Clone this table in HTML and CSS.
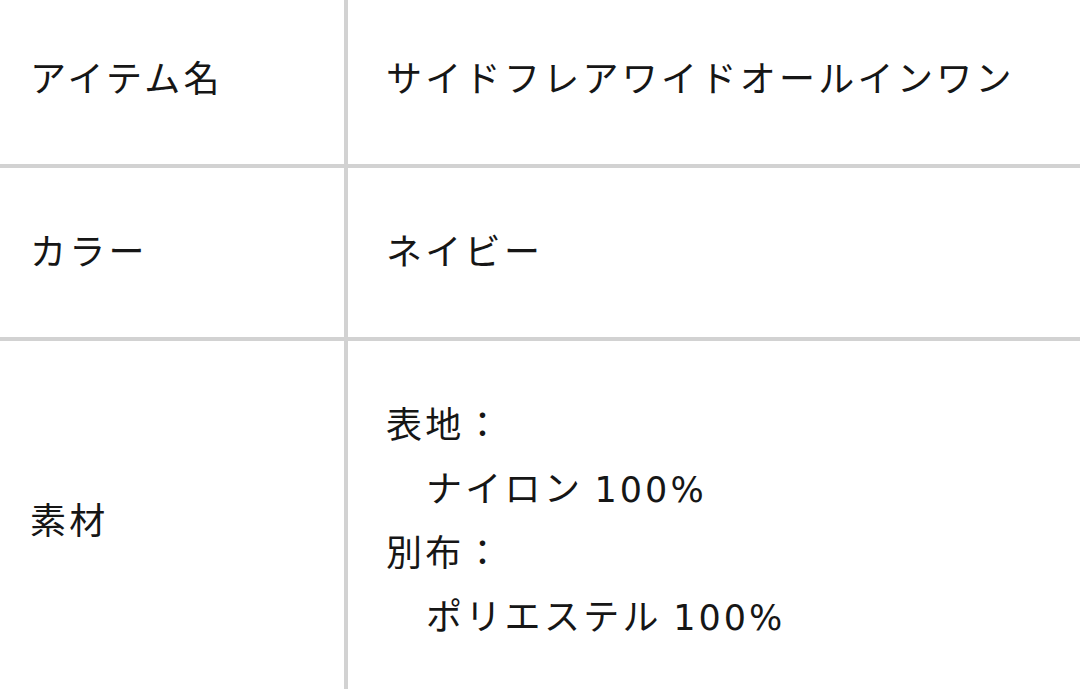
FILE: index.html
```html
<!DOCTYPE html>
<html lang="ja">
<head>
<meta charset="utf-8">
<link rel="stylesheet" href="styles.css">
</head>
<body>
<table class="spec">
  <tr>
    <th class="label">アイテム名</th>
    <td class="value">サイドフレアワイドオールインワン</td>
  </tr>
  <tr>
    <th class="label">カラー</th>
    <td class="value">ネイビー</td>
  </tr>
  <tr>
    <th class="label">素材</th>
    <td class="value">
      <div>表地：</div>
      <div class="indent">ナイロン <span class="num">100%</span></div>
      <div>別布：</div>
      <div class="indent">ポリエステル <span class="num">100%</span></div>
    </td>
  </tr>
</table>
</body>
</html>
```
FILE: styles.css
```css
html, body {
  margin: 0;
  padding: 0;
  background: #ffffff;
}
body {
  width: 1080px;
  height: 689px;
  overflow: hidden;
  font-family: "Noto Sans CJK JP", "Noto Sans", sans-serif;
  color: #161616;
}
.spec {
  width: 1080px;
  border-collapse: collapse;
  margin-top: -5px;
}
.label,
.value {
  font-weight: 400;
  font-size: 36px;
  letter-spacing: 3.3px;
  line-height: 64px;
  text-align: left;
  vertical-align: middle;
  padding: 49px 0 56px 0;
  border-bottom: 4px solid #d2d2d2;
}
.label {
  width: 314px;
  padding-left: 30px;
  border-right: 4px solid #d2d2d2;
}
.value {
  padding-left: 38px;
}
.indent {
  padding-left: 40px;
  height: 64px;
}
.num {
  font-family: "DejaVu Sans", "Noto Sans", sans-serif;
  font-size: 35px;
  letter-spacing: 3px;
  line-height: 0;
}
```
